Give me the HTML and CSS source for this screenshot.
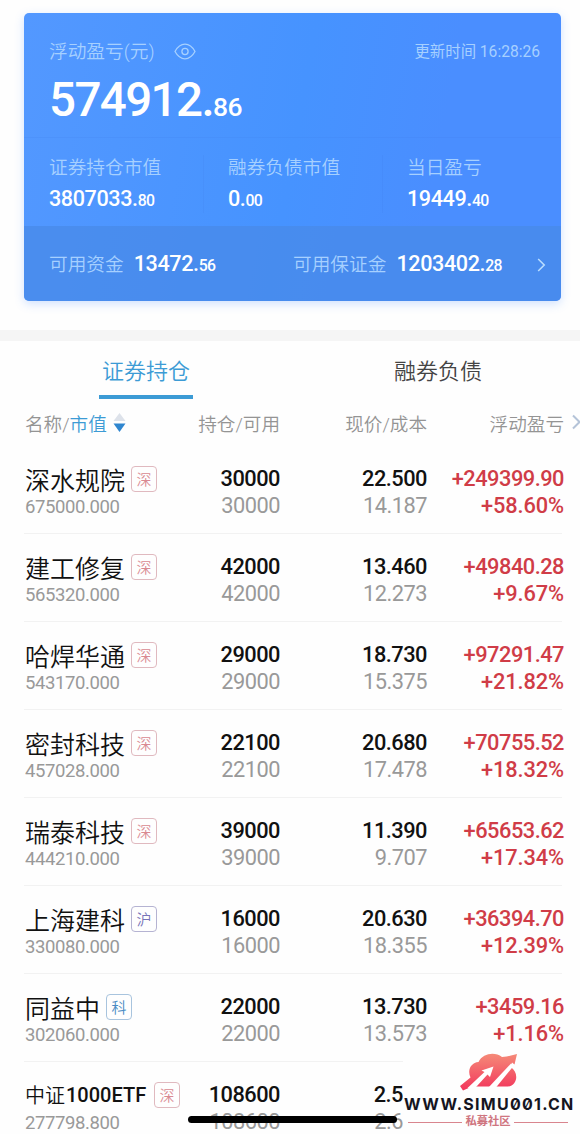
FILE: index.html
```html
<!DOCTYPE html>
<html lang="zh-CN">
<head>
  <meta charset="UTF-8" />
  <meta name="viewport" content="width=device-width, initial-scale=1">
  <title>证券持仓</title>
  <link rel="stylesheet" href="styles.css">
</head>
<body>

  <div class="screen">
    <div class="card">
      <div class="card-top">
        <div class="card-title">
          <span class="label">浮动盈亏(元)</span>
          <svg class="eye" width="22" height="17" viewBox="0 0 22 17" fill="none" stroke="currentColor" stroke-width="1.3">
            <path d="M1 8.5C3.6 3.8 7 1.2 11 1.2s7.4 2.6 10 7.3c-2.6 4.7-6 7.3-10 7.3S3.6 13.2 1 8.5z" />
            <circle cx="11" cy="8.5" r="3.1" />
          </svg>
          <span class="time">更新时间 <span class="clock">16:28:26</span></span>
        </div>
        <div class="total">574912.<small>86</small></div>
      </div>
      <div class="stats">
        <div class="stat">
          <div class="label">证券持仓市值</div>
          <div class="num">3807033.<small>80</small></div>
        </div>
        <div class="stat">
          <div class="label">融券负债市值</div>
          <div class="num">0.<small>00</small></div>
        </div>
        <div class="stat">
          <div class="label">当日盈亏</div>
          <div class="num">19449.<small>40</small></div>
        </div>
      </div>
      <div class="funds">
        <div class="fund">
          <span class="label">可用资金</span>
          <span class="num">13472.<small>56</small></span>
        </div>
        <div class="fund">
          <span class="label">可用保证金</span>
          <span class="num">1203402.<small>28</small></span>
        </div>
        <svg class="more" width="9" height="14" viewBox="0 0 9 14" fill="none" stroke="currentColor" stroke-width="1.6">
          <path d="M1.2 1l6 6-6 6" />
        </svg>
      </div>
    </div>

    <div class="band"></div>

    <div class="tabs">
      <div class="tab active"><span>证券持仓</span></div>
      <div class="tab"><span>融券负债</span></div>
    </div>

    <div class="grid head">
      <div class="sort">名称/<span class="blue">市值</span>
        <svg width="13" height="21" viewBox="0 0 13 21">
          <path d="M6.5 1L12.5 9H0.5z" fill="#dde2ea" />
          <path d="M0.5 11.5h12L6.5 20z" fill="#2f86cf" />
        </svg>
      </div>
      <div>持仓/可用</div>
      <div>现价/成本</div>
      <div>浮动盈亏</div>
      <svg class="next" width="8" height="16" viewBox="0 0 8 16" fill="none" stroke="#b4c3d8" stroke-width="2">
        <path d="M1 1.5L7.5 8 1 14.5" />
      </svg>
    </div>

    <div class="list">
      <div class="grid row">
        <div><div class="name">深水规院<i class="tag">深</i></div><div class="value">675000.000</div></div>
        <div><b>30000</b><span>30000</span></div>
        <div><b>22.500</b><span>14.187</span></div>
        <div class="up"><b>+249399.90</b><span>+58.60%</span></div>
      </div>
      <div class="grid row">
        <div><div class="name">建工修复<i class="tag">深</i></div><div class="value">565320.000</div></div>
        <div><b>42000</b><span>42000</span></div>
        <div><b>13.460</b><span>12.273</span></div>
        <div class="up"><b>+49840.28</b><span>+9.67%</span></div>
      </div>
      <div class="grid row">
        <div><div class="name">哈焊华通<i class="tag">深</i></div><div class="value">543170.000</div></div>
        <div><b>29000</b><span>29000</span></div>
        <div><b>18.730</b><span>15.375</span></div>
        <div class="up"><b>+97291.47</b><span>+21.82%</span></div>
      </div>
      <div class="grid row">
        <div><div class="name">密封科技<i class="tag">深</i></div><div class="value">457028.000</div></div>
        <div><b>22100</b><span>22100</span></div>
        <div><b>20.680</b><span>17.478</span></div>
        <div class="up"><b>+70755.52</b><span>+18.32%</span></div>
      </div>
      <div class="grid row">
        <div><div class="name">瑞泰科技<i class="tag">深</i></div><div class="value">444210.000</div></div>
        <div><b>39000</b><span>39000</span></div>
        <div><b>11.390</b><span>9.707</span></div>
        <div class="up"><b>+65653.62</b><span>+17.34%</span></div>
      </div>
      <div class="grid row">
        <div><div class="name">上海建科<i class="tag hu">沪</i></div><div class="value">330080.000</div></div>
        <div><b>16000</b><span>16000</span></div>
        <div><b>20.630</b><span>18.355</span></div>
        <div class="up"><b>+36394.70</b><span>+12.39%</span></div>
      </div>
      <div class="grid row">
        <div><div class="name">同益中<i class="tag ke">科</i></div><div class="value">302060.000</div></div>
        <div><b>22000</b><span>22000</span></div>
        <div><b>13.730</b><span>13.573</span></div>
        <div class="up"><b>+3459.16</b><span>+1.16%</span></div>
      </div>
      <div class="grid row">
        <div><div class="name long">中证<em>1000ETF</em><i class="tag">深</i></div><div class="value">277798.800</div></div>
        <div><b>108600</b><span>108600</span></div>
        <div class="cut"><b>2.5</b><span>2.6</span></div>
      </div>
    </div>

    <div class="watermark">
      <svg width="60" height="40" viewBox="0 0 60 40">
        <defs>
          <linearGradient id="red" x1="0" y1="0" x2="0" y2="1">
            <stop offset="0" stop-color="#f58a78" />
            <stop offset="1" stop-color="#f2365c" />
          </linearGradient>
        </defs>
        <path fill="url(#red)" d="M1 34L11.5 25.5C8 18 12 10.5 19.5 10C24 1 36 -.5 43 5L47.5 4.5L58 2L55.5 12.5L53 10.5L51.5 15C60 20 59 33 49 34.5L13 34.5L4 38.5z" />
        <path fill="#fff" d="M8.5 36L25.5 20L22.5 18.5L34.5 14.5L31 25L28.5 22.5L18 34L16 36z" />
        <path fill="#fff" d="M29.5 35.5L52 11.5L54.5 14L37 35.5z" />
      </svg>
      <div class="site">WWW.SIMU001.CN</div>
      <div class="club">私募社区</div>
    </div>
    <div class="home-bar"></div>
  </div>

</body>
</html>
```

FILE: styles.css
```css
* {
  box-sizing: border-box;
}

body {
  margin: 0;
  background: #fefefe;
  font-family: Roboto, 'Noto Sans CJK SC', sans-serif;
  font-weight: 400;
}

.screen {
  position: relative;
  width: 580px;
  height: 1134px;
  padding-top: 13px;
  overflow: hidden;
}

/* account card */
.card {
  width: 537px;
  height: 288px;
  margin-left: 24px;
  border-radius: 5px;
  overflow: hidden;
  color: #fff;
  background: linear-gradient(100deg, #5398ff 0%, #4693ff 50%, #4a8eff 75%, #4a8eff 100%);
  box-shadow: 0 3px 10px rgba(74, 143, 255, 0.25);
}

.card-top {
  height: 125px;
  padding: 26px 21px 0 25px;
  border-bottom: 1px solid rgba(60, 120, 225, 0.15);
}

.card-title {
  display: flex;
  align-items: center;
  height: 25px;
}

.label {
  font-size: 18.7px;
  line-height: 26px;
  font-weight: 350;
  color: #a6d0ff;
}

.eye {
  margin-left: 19px;
  color: #a6d0ff;
}

.time {
  margin-left: auto;
  font-size: 15.4px;
  line-height: 20px;
  color: #a6d0ff;
}

.clock {
  font-size: 15.6px;
}

.total {
  margin-top: 7px;
  font-size: 47.5px;
  line-height: 58px;
  font-weight: 500;
  letter-spacing: -1.6px;
}

.total small {
  font-size: 26.5px;
  letter-spacing: -0.6px;
}

.stats {
  display: flex;
  height: 88px;
  padding-top: 17px;
}

.stat {
  width: 179px;
  height: 58px;
  padding-left: 25px;
}

.stat + .stat {
  padding-left: 24px;
  border-left: 1px solid rgba(60, 120, 225, 0.15);
}

.num {
  font-size: 21.6px;
  line-height: 36px;
  font-weight: 500;
  letter-spacing: -0.4px;
}

.num small {
  font-size: 15.8px;
  letter-spacing: -0.7px;
}

.funds {
  display: flex;
  align-items: center;
  height: 75px;
  padding: 2px 15px 0 25px;
  background: rgba(72, 138, 232, 0.75);
}

.fund {
  display: flex;
  align-items: center;
  gap: 10px;
  width: 244px;
}

.more {
  margin-left: auto;
  color: #b8dcff;
}

.band {
  height: 11px;
  margin-top: 29px;
  background: #f5f5f5;
}

/* tabs */
.tabs {
  display: flex;
  height: 58px;
}

.tab {
  width: 292px;
  flex: none;
  text-align: center;
  font-size: 22px;
  line-height: 62px;
  font-weight: 350;
  color: #444;
}

.tab span {
  display: inline-block;
  height: 58px;
  padding: 0 3px;
}

.tab.active {
  color: #3c9bd5;
}

.tab.active span {
  border-bottom: 4px solid #3c9bd5;
}

/* positions */
.grid {
  display: grid;
  grid-template-columns: 155px 100px 147px 137px 16px;
  padding-left: 25px;
}

.grid > div {
  text-align: right;
  white-space: nowrap;
}

.grid > div:first-child {
  text-align: left;
}

.head {
  height: 47px;
  padding-bottom: 1px;
  align-items: center;
  font-size: 18.6px;
  font-weight: 350;
  color: #949494;
}

.sort {
  display: flex;
  align-items: center;
}

.sort svg {
  margin-left: 6px;
}

.blue {
  color: #3c9bd5;
}

.next {
  justify-self: end;
}

.row {
  position: relative;
  height: 88px;
  padding-top: 18px;
  font-size: 21.8px;
  letter-spacing: -0.5px;
}

.row::after {
  content: '';
  position: absolute;
  left: 24px;
  right: 18px;
  bottom: 0;
  height: 1px;
  background: #f2f2f2;
}

.row b,
.row span {
  display: block;
  line-height: 27px;
}

.row b {
  padding-top: 1px;
  font-weight: 500;
  color: #111;
}

.row span {
  color: #999;
}

.row .up b,
.row .up span {
  font-weight: 500;
  color: #d03c47;
}

.row .up span {
  letter-spacing: -0.1px;
}

.name {
  display: flex;
  align-items: center;
  height: 30px;
  font-family: 'Noto Sans CJK SC', sans-serif;
  font-size: 25px;
  font-weight: 350;
  line-height: 30px;
  letter-spacing: 0;
  color: #111;
}

.name.long {
  font-size: 20px;
}

.name em {
  font-family: Roboto, sans-serif;
  font-style: normal;
  font-weight: 500;
  margin-left: 1px;
}

.tag {
  width: 26px;
  height: 26px;
  margin-left: 6px;
  border: 1px solid #e0b9bf;
  border-radius: 4px;
  font-size: 15px;
  line-height: 24px;
  font-style: normal;
  text-align: center;
  color: #d98992;
}

.name.long .tag {
  margin-left: 8px;
}

.tag.hu {
  border-color: #b5b3d2;
  color: #7774b8;
}

.tag.ke {
  border-color: #a8c4de;
  color: #4a8cc4;
}

.value {
  font-size: 18.5px;
  line-height: 26px;
  letter-spacing: -0.4px;
  color: #999;
}

.grid > .cut {
  padding-right: 24px;
}

/* site watermark */
.watermark {
  position: absolute;
  left: 403px;
  top: 1052px;
  width: 177px;
  height: 82px;
  background: #fefefe;
}

.watermark svg {
  display: block;
  margin-left: 56px;
}

.site {
  padding-left: 1px;
  font: 700 16px/24px Inter, sans-serif;
  font-feature-settings: 'zero';
  letter-spacing: 1.25px;
  white-space: nowrap;
  color: #15151f;
}

.club {
  display: flex;
  align-items: center;
  gap: 3px;
  width: 160px;
  margin-left: 5px;
  font-size: 11.3px;
  line-height: 12px;
  font-weight: 700;
  white-space: nowrap;
  color: #cf7580;
}

.club::before,
.club::after {
  content: '';
  flex: 1;
  height: 1px;
  background: #d9858e;
}

.home-bar {
  position: absolute;
  left: 188px;
  top: 1116px;
  width: 209px;
  height: 7px;
  border-radius: 4px;
  background: #000;
}
```
